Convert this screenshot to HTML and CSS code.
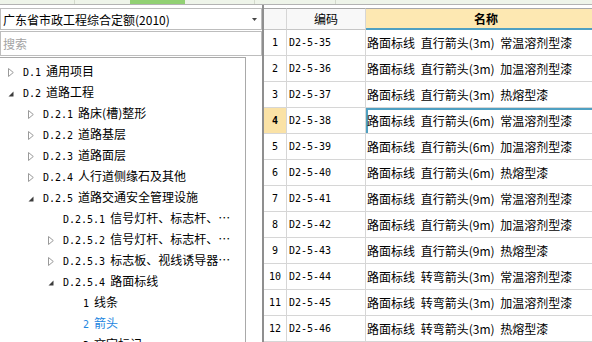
FILE: index.html
```html
<!DOCTYPE html>
<html lang="zh-CN">
<head>
    <meta charset="UTF-8">
    <title>定额库</title>
    <link rel="stylesheet" href="styles.css">
</head>
<body>
    <div class="strip">
        <span class="s1"></span>
        <span class="s2"></span>
        <span class="s3"></span>
        <span class="s4"></span>
        <span class="s5"></span>
    </div>
    <div class="main">
        <aside class="left">
            <div class="combo">
                <span>广东省市政工程综合定额(2010)</span>
                <svg class="drop" width="5" height="3" viewBox="0 0 5 3"><path d="M0 0H5L2.5 3Z" fill="#444"/></svg>
            </div>
            <div class="search">搜索</div>
            <ul class="tree">
                <li class="lv0"><svg class="tg" width="6" height="9" viewBox="0 0 6 9"><path d="M0.5 0.5L5.3 4.5L0.5 8.5Z" fill="none" stroke="#9a9a9a"/></svg><span class="no">D.1</span>通用项目</li>
                <li class="lv0"><svg class="tg" width="6" height="9" viewBox="0 0 6 9"><path d="M5.5 2.5V7.5H0.5Z" fill="#3c3c3c"/></svg><span class="no">D.2</span>道路工程</li>
                <li class="lv1"><svg class="tg" width="6" height="9" viewBox="0 0 6 9"><path d="M0.5 0.5L5.3 4.5L0.5 8.5Z" fill="none" stroke="#9a9a9a"/></svg><span class="no">D.2.1</span>路床(槽)整形</li>
                <li class="lv1"><svg class="tg" width="6" height="9" viewBox="0 0 6 9"><path d="M0.5 0.5L5.3 4.5L0.5 8.5Z" fill="none" stroke="#9a9a9a"/></svg><span class="no">D.2.2</span>道路基层</li>
                <li class="lv1"><svg class="tg" width="6" height="9" viewBox="0 0 6 9"><path d="M0.5 0.5L5.3 4.5L0.5 8.5Z" fill="none" stroke="#9a9a9a"/></svg><span class="no">D.2.3</span>道路面层</li>
                <li class="lv1"><svg class="tg" width="6" height="9" viewBox="0 0 6 9"><path d="M0.5 0.5L5.3 4.5L0.5 8.5Z" fill="none" stroke="#9a9a9a"/></svg><span class="no">D.2.4</span>人行道侧缘石及其他</li>
                <li class="lv1"><svg class="tg" width="6" height="9" viewBox="0 0 6 9"><path d="M5.5 2.5V7.5H0.5Z" fill="#3c3c3c"/></svg><span class="no">D.2.5</span>道路交通安全管理设施</li>
                <li class="lv2"><i class="tg"></i><span class="no">D.2.5.1</span>信号灯杆、标志杆、门架基础</li>
                <li class="lv2"><svg class="tg" width="6" height="9" viewBox="0 0 6 9"><path d="M0.5 0.5L5.3 4.5L0.5 8.5Z" fill="none" stroke="#9a9a9a"/></svg><span class="no">D.2.5.2</span>信号灯杆、标志杆、门架安装</li>
                <li class="lv2"><svg class="tg" width="6" height="9" viewBox="0 0 6 9"><path d="M0.5 0.5L5.3 4.5L0.5 8.5Z" fill="none" stroke="#9a9a9a"/></svg><span class="no">D.2.5.3</span>标志板、视线诱导器安装</li>
                <li class="lv2"><svg class="tg" width="6" height="9" viewBox="0 0 6 9"><path d="M5.5 2.5V7.5H0.5Z" fill="#3c3c3c"/></svg><span class="no">D.2.5.4</span>路面标线</li>
                <li class="lv3"><i class="tg"></i><span class="no">1</span>线条</li>
                <li class="lv3 cur"><i class="tg"></i><span class="no">2</span>箭头</li>
                <li class="lv3"><i class="tg"></i><span class="no">3</span>文字标记</li>
            </ul>
        </aside>
        <section class="grid">
            <div class="row head">
                <div class="rn"></div>
                <div class="code">编码</div>
                <div class="nm">名称</div>
            </div>
            <div class="row"><div class="rn">1</div><div class="code">D2-5-35</div><div class="nm">路面标线 直行箭头(3m) 常温溶剂型漆</div></div>
            <div class="row"><div class="rn">2</div><div class="code">D2-5-36</div><div class="nm">路面标线 直行箭头(3m) 加温溶剂型漆</div></div>
            <div class="row"><div class="rn">3</div><div class="code">D2-5-37</div><div class="nm">路面标线 直行箭头(3m) 热熔型漆</div></div>
            <div class="row sel"><div class="rn">4</div><div class="code">D2-5-38</div><div class="nm">路面标线 直行箭头(6m) 常温溶剂型漆</div></div>
            <div class="row"><div class="rn">5</div><div class="code">D2-5-39</div><div class="nm">路面标线 直行箭头(6m) 加温溶剂型漆</div></div>
            <div class="row"><div class="rn">6</div><div class="code">D2-5-40</div><div class="nm">路面标线 直行箭头(6m) 热熔型漆</div></div>
            <div class="row"><div class="rn">7</div><div class="code">D2-5-41</div><div class="nm">路面标线 直行箭头(9m) 常温溶剂型漆</div></div>
            <div class="row"><div class="rn">8</div><div class="code">D2-5-42</div><div class="nm">路面标线 直行箭头(9m) 加温溶剂型漆</div></div>
            <div class="row"><div class="rn">9</div><div class="code">D2-5-43</div><div class="nm">路面标线 直行箭头(9m) 热熔型漆</div></div>
            <div class="row"><div class="rn">10</div><div class="code">D2-5-44</div><div class="nm">路面标线 转弯箭头(3m) 常温溶剂型漆</div></div>
            <div class="row"><div class="rn">11</div><div class="code">D2-5-45</div><div class="nm">路面标线 转弯箭头(3m) 加温溶剂型漆</div></div>
            <div class="row"><div class="rn">12</div><div class="code">D2-5-46</div><div class="nm">路面标线 转弯箭头(3m) 热熔型漆</div></div>
        </section>
    </div>
</body>
</html>
```

FILE: styles.css
```css
body {
    margin: 0;
    width: 592px;
    height: 342px;
    overflow: hidden;
    background: #fff;
    color: #000;
    font-family: "Noto Sans CJK SC", sans-serif;
    font-size: 12px;
}
.strip {
    display: flex;
    height: 4px;
    background: #eef4e9;
    border-bottom: 1px solid #b3b3b3;
}
.strip span {
    flex: none;
    border-right: 1px solid #d3dacc;
}
.strip .s1 { width: 74px; }
.strip .s2 { width: 55px; border-right: none; }
.strip .s3 { width: 55px; background: #92d174; border-right: none; }
.strip .s4 { width: 69px; }
.strip .s5 { width: 80px; }
.main {
    display: flex;
    height: 337px;
}
.left {
    display: flex;
    flex-direction: column;
    width: 262px;
    flex: none;
    padding-top: 3px;
    box-sizing: border-box;
}
.combo {
    display: flex;
    align-items: center;
    justify-content: space-between;
    height: 22px;
    padding: 0 4px 0 2px;
    border: 1px solid #bdbdbd;
    box-sizing: border-box;
    white-space: nowrap;
}
.search {
    margin-top: 1px;
    height: 25px;
    line-height: 23px;
    padding-left: 2px;
    border: 1px solid #bdbdbd;
    box-sizing: border-box;
    color: #a3a3a3;
}
.tree {
    flex: 1;
    width: 246px;
    margin: 1px 0 0;
    padding: 2px 5px 0 0;
    box-sizing: border-box;
    list-style: none;
    border-top: 1px solid #a9a9a9;
    border-right: 1px solid #a9a9a9;
    overflow: hidden;
}
.tree li {
    height: 21px;
    line-height: 21px;
    white-space: nowrap;
    overflow: hidden;
    text-overflow: ellipsis;
}
.tree .lv0 { padding-left: 8px; }
.tree .lv1 { padding-left: 28px; }
.tree .lv2 { padding-left: 48px; }
.tree .lv3 { padding-left: 68px; }
.tree .cur { color: #1e86e0; }
.tg {
    display: inline-block;
    width: 6px;
    height: 9px;
    margin-right: 9px;
    vertical-align: -1px;
}
.no {
    font-family: "DejaVu Sans Mono", monospace;
    font-size: 10px;
    margin-right: 5px;
}
.grid {
    flex: 1;
    padding-top: 3px;
    border-left: 2px solid #8f8f8f;
    overflow: hidden;
}
.row {
    display: grid;
    grid-template-columns: 23px 79px 240px;
}
.row > div {
    height: 26px;
    line-height: 25px;
    box-sizing: border-box;
    border-right: 1px solid #d6d6d6;
    border-bottom: 1px solid #d6d6d6;
    white-space: nowrap;
    overflow: hidden;
}
.row .rn {
    text-align: center;
    font-family: "DejaVu Sans Mono", monospace;
    font-size: 10px;
}
.row .code {
    padding-left: 2px;
    font-family: "DejaVu Sans Mono", monospace;
    font-size: 10px;
}
.row .nm {
    padding-left: 1px;
    word-spacing: 3px;
}
.head > div {
    height: 22px;
    line-height: 20px;
    text-align: center;
    background: #f8f8f8;
    border-top: 1px solid #a8a8a8;
    border-bottom-color: #c6c6c6;
}
.head .code {
    font-family: "Noto Sans CJK SC", sans-serif;
    font-size: 12px;
    padding-left: 0;
}
.head .nm {
    background: #fde8b2;
    font-weight: bold;
    border-bottom: 2px solid #4fa0c2;
    line-height: 19px;
}
.sel .rn {
    background: #fae2a6;
    font-weight: bold;
}
.sel .nm {
    box-shadow: inset 2px 2px 0 #4fa0c2;
}
```
